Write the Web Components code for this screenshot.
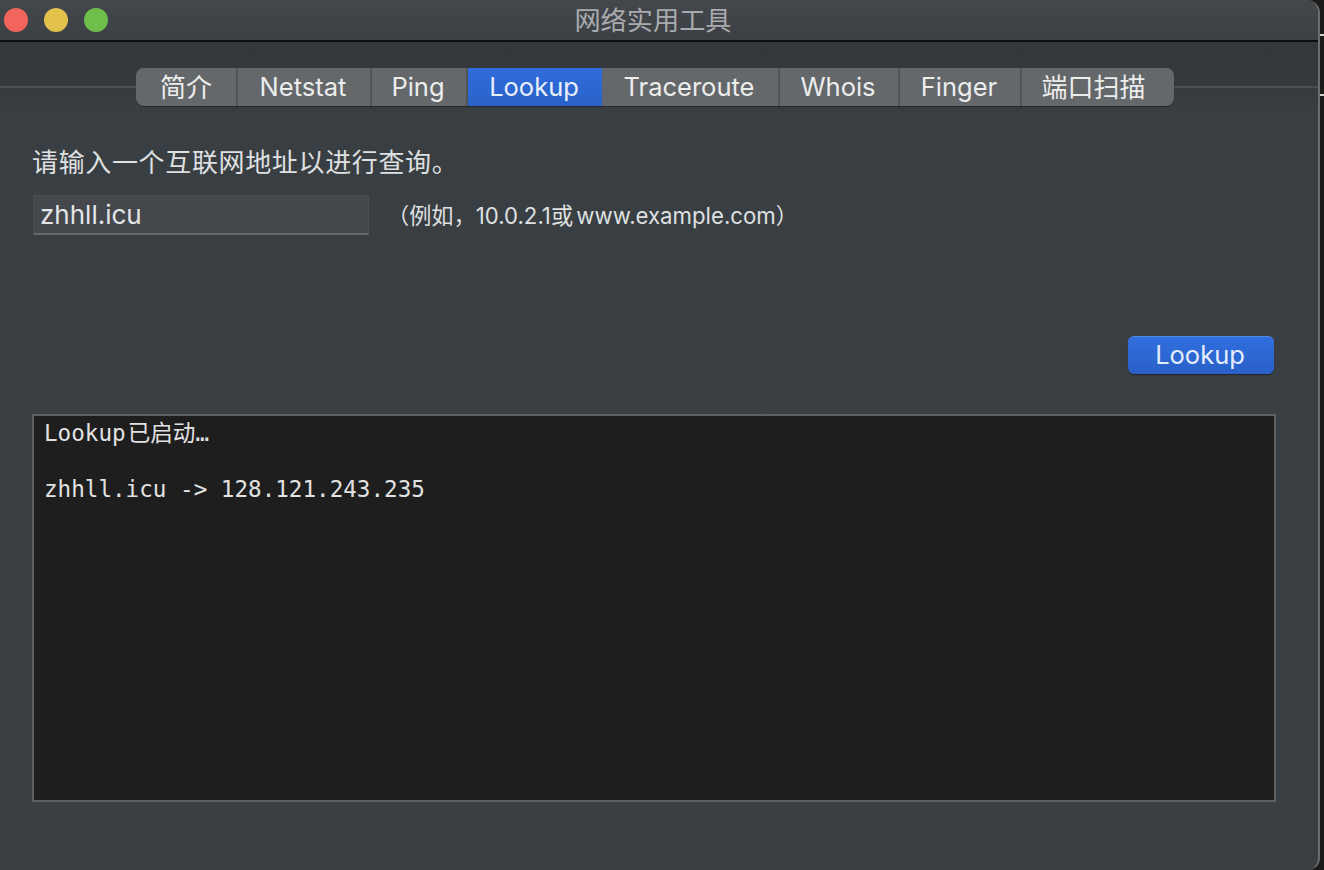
<!DOCTYPE html>
<html lang="zh"><head><meta charset="utf-8"><title>网络实用工具</title>
<style>
html,body{margin:0;padding:0;height:870px;overflow:hidden;background:#1d1c1a}
body{font-family:Inter,"Noto Sans CJK SC",sans-serif}
</style></head><body>
<nu-desk>
<nu-window>
  <nu-titlebar slot="title">网络实用工具</nu-titlebar>
  <nu-tabs>
    <nu-tab cjk style="width:102px">简介</nu-tab><nu-tab style="width:134px">Netstat</nu-tab><nu-tab style="width:96px">Ping</nu-tab><nu-tab active style="width:134px">Lookup</nu-tab><nu-tab style="width:178px">Traceroute</nu-tab><nu-tab style="width:120px">Whois</nu-tab><nu-tab style="width:122px">Finger</nu-tab><nu-tab cjk last style="width:152px">端口扫描</nu-tab>
  </nu-tabs>
  <nu-lookup></nu-lookup>
</nu-window>
</nu-desk>
<script>
const def=(n,css,html)=>{customElements.define(n,class extends HTMLElement{
  constructor(){super();this.attachShadow({mode:'open'}).innerHTML=`<style>${css}</style>${html}`;}
});};
def('nu-desk',`
:host{display:block;width:1324px;height:870px;position:relative;background:#1c1b19}
:host::before,:host::after{content:"";position:absolute;left:1320px;width:4px;height:2px;background:#cfcfca}
:host::before{top:34px}
:host::after{top:94px}
`,`<slot></slot>`);
def('nu-window',`
:host{display:flex;flex-direction:column;width:1320px;height:870px;box-sizing:border-box;
 background:linear-gradient(#393e42,#3a3f43);border-radius:0 13px 12px 0;border-right:2px solid #6a6d70;overflow:hidden;position:relative}
`,`<slot name="title"></slot><slot></slot>`);
def('nu-titlebar',`
:host{display:flex;flex:none;box-sizing:border-box;height:42px;border-bottom:2px solid #0d0e10;align-items:center;justify-content:center;
 background:linear-gradient(#44484d,#3c4045);color:#a9abae;font:400 26.2px "Noto Sans CJK SC",sans-serif;padding:0 12px 2px 0;position:relative}
.l{position:absolute;left:4px;top:8px;display:flex;gap:16px}
.l i{display:block;width:24px;height:24px;border-radius:50%}
`,`<div class="l"><i style="background:#f2655c"></i><i style="background:#e4c04c"></i><i style="background:#6dbe4b"></i></div><slot></slot>`);
def('nu-tabs',`
:host{display:flex;flex:none;height:66px;box-sizing:border-box;padding:26px 0 0 136px;background:linear-gradient(#33373b 0,#363a3e 44px,#393e42 66px);position:relative}
:host::before{content:"";position:absolute;left:0;right:0;top:44px;height:2px;background:#4b4f53}
.g{display:flex;height:38px;position:relative;border-radius:8px;overflow:hidden;box-shadow:0 1px 1px rgba(0,0,0,.35)}
`,`<div class="g"><slot></slot></div>`);
def('nu-tab',`
:host{display:flex;box-sizing:border-box;height:38px;align-items:center;justify-content:center;background:#65686b;color:#eceded;
 font:400 25.5px Inter,"Noto Sans CJK SC",sans-serif;border-right:2px solid #525558;padding:0 2px 2px 0}
:host([cjk]){font-size:26px;padding:0 0 3px 0}
:host([last]){padding-right:9px}
:host(:last-child){border-right:0}
:host([active]){background:linear-gradient(#2f6cdc,#2a62c8);color:#e9effb;border-right:0}
`,`<slot></slot>`);
def('nu-lookup',`
:host{display:flex;flex-direction:column;flex:1;padding:37px 42px 68px 32px;color:#e3e4e5;min-height:0}
.p{font:400 26px/32px "Noto Sans CJK SC",sans-serif;color:#dfe0e1;height:36px;letter-spacing:.65px}
.r{display:flex;align-items:center;margin-top:14px;height:40px;padding-left:1px}
.f{width:336px;height:40px;box-sizing:border-box;background:#44484d;border:1px solid #4a4e52;border-bottom:2px solid #63666a;
 font:400 26px/38px Inter,sans-serif;color:#e3e4e5;padding:0 0 0 6px}
.h{margin-left:18px;font:400 22.2px Inter,"Noto Sans CJK SC",sans-serif;color:#dfe0e1;padding-bottom:2px;word-spacing:-3px}
.a{display:flex;justify-content:flex-end;margin-top:101px;padding-right:2px}
.b{width:146px;height:38px;box-sizing:border-box;border-radius:6px;background:linear-gradient(#306fdf,#2a60c8);box-shadow:0 1px 1px rgba(0,0,0,.4);
 border-top:1px solid #5488e4;color:#e4edfc;font:400 25.5px/36px Inter,sans-serif;text-align:center;padding-right:2px}
.o{margin-top:40px;flex:1;box-sizing:border-box;background:#1e1e1e;border:2px solid #5d5f61;
 font:400 22.6px/28px "DejaVu Sans Mono","Noto Sans CJK SC",monospace;color:#e2e2e2;padding:3px 10px;white-space:pre;overflow:hidden}
.o span{margin-left:2px}
`,`<div class="p">请输入一个互联网地址以进行查询。</div>
<div class="r"><div class="f">zhhll.icu</div><div class="h">（例如，10.0.2.1或 www.example.com）</div></div>
<div class="a"><div class="b">Lookup</div></div>
<div class="o">Lookup<span>已启动…</span>

zhhll.icu -&gt; 128.121.243.235</div>`);
</script></body></html>
